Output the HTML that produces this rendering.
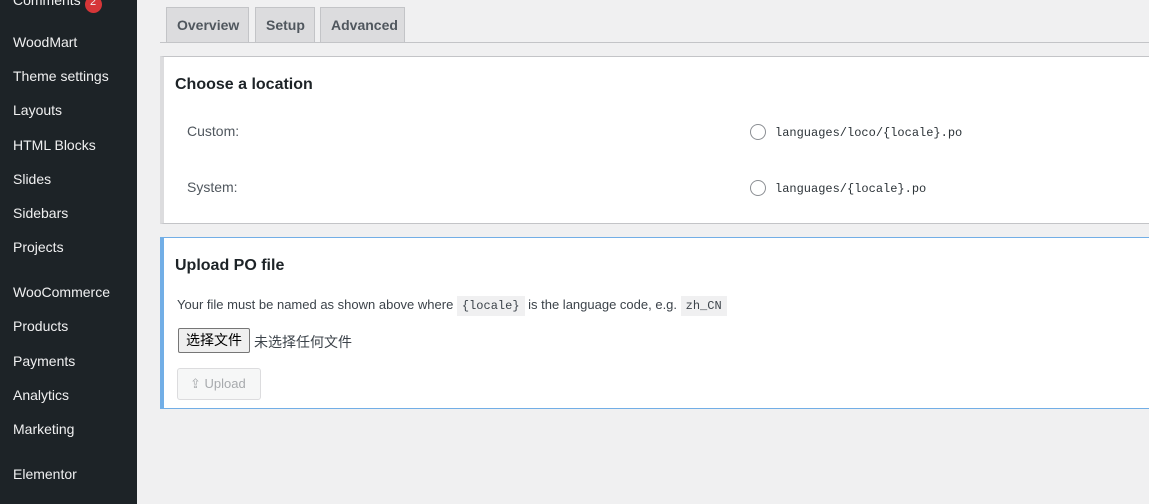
<!DOCTYPE html>
<html><head><meta charset="utf-8"><style>
*{margin:0;padding:0;box-sizing:border-box}
body{width:1149px;height:504px;overflow:hidden;background:#f0f0f1;font-family:"Liberation Sans","Noto Sans CJK SC",sans-serif;font-size:13px;color:#3c434a;position:relative}
#sb{position:absolute;left:0;top:0;width:137px;height:504px;background:#1d2327}
.mi{position:absolute;left:13px;color:#f0f0f1;font-size:14px}
.tab{position:absolute;top:7px;height:36px;background:#dcdcde;border:1px solid #c3c4c7;border-bottom:none;font-weight:bold;font-size:14px;color:#50575e;padding:9px 10px 0}
#line{position:absolute;left:160px;right:0;top:42px;border-top:1px solid #c3c4c7}
.box{position:absolute;left:160px;width:1000px;background:#fff;border:1px solid #c3c4c7}
h2{position:absolute;left:11px;font-size:16px;font-weight:bold;color:#1d2327}
.lbl{position:absolute;left:23px;font-size:14px;color:#50575e}
.rad{position:absolute;left:586px;width:16px;height:16px;border:1px solid #8c8f94;border-radius:50%}
.mono{font-family:"Liberation Mono",monospace;font-size:12px;color:#2c3338}
code{font-family:"Liberation Mono",monospace;font-size:12px;background:#f0f0f1;padding:3px 5px}
</style></head><body>
<div id="sb">
<div class="mi" style="top:-8px">Comments <span style="display:inline-block;background:#d63638;border-radius:9px;width:17px;height:17px;font-size:11px;text-align:center">2</span></div>
<div class="mi" style="top:34px">WoodMart</div>
<div class="mi" style="top:68px">Theme settings</div>
<div class="mi" style="top:102px">Layouts</div>
<div class="mi" style="top:137px">HTML Blocks</div>
<div class="mi" style="top:171px">Slides</div>
<div class="mi" style="top:205px">Sidebars</div>
<div class="mi" style="top:239px">Projects</div>
<div class="mi" style="top:284px">WooCommerce</div>
<div class="mi" style="top:318px">Products</div>
<div class="mi" style="top:353px">Payments</div>
<div class="mi" style="top:387px">Analytics</div>
<div class="mi" style="top:421px">Marketing</div>
<div class="mi" style="top:466px">Elementor</div>
</div>
<div class="tab" style="left:166px;width:83px">Overview</div>
<div class="tab" style="left:255px;width:60px">Setup</div>
<div class="tab" style="left:320px;width:85px">Advanced</div>
<div id="line"></div>
<div class="box" style="top:56px;height:168px;border-left:4px solid #dcdcde">
<h2 style="top:19px">Choose a location</h2>
<div class="lbl" style="top:66px">Custom:</div>
<div class="rad" style="top:67px"></div><div class="mono" style="position:absolute;left:611px;top:69px">languages/loco/{locale}.po</div>
<div class="lbl" style="top:122px">System:</div>
<div class="rad" style="top:123px"></div><div class="mono" style="position:absolute;left:611px;top:125px">languages/{locale}.po</div>
</div>
<div class="box" style="top:237px;height:172px;border:1px solid #72aee6;border-left:4px solid #72aee6">
<h2 style="top:19px">Upload PO file</h2>
<div style="position:absolute;left:13px;top:59px;font-size:13px;color:#3c434a">Your file must be named as shown above where <code>{locale}</code> is the language code, e.g. <code>zh_CN</code></div>
<div style="position:absolute;left:14px;top:90px;width:72px;height:25px;border:1px solid #767676;background:#efefef;border-radius:2px;font-size:14px;color:#000;text-align:center;line-height:23px">选择文件</div>
<div style="position:absolute;left:90px;top:94px;font-size:14px;color:#3c434a">未选择任何文件</div>
<div style="position:absolute;left:13px;top:130px;width:84px;height:32px;border:1px solid #dcdcde;background:#f6f7f7;border-radius:3px;color:#a7aaad;font-size:13px;line-height:30px;padding-left:12px">⇪ Upload</div>
</div>
</body></html>
